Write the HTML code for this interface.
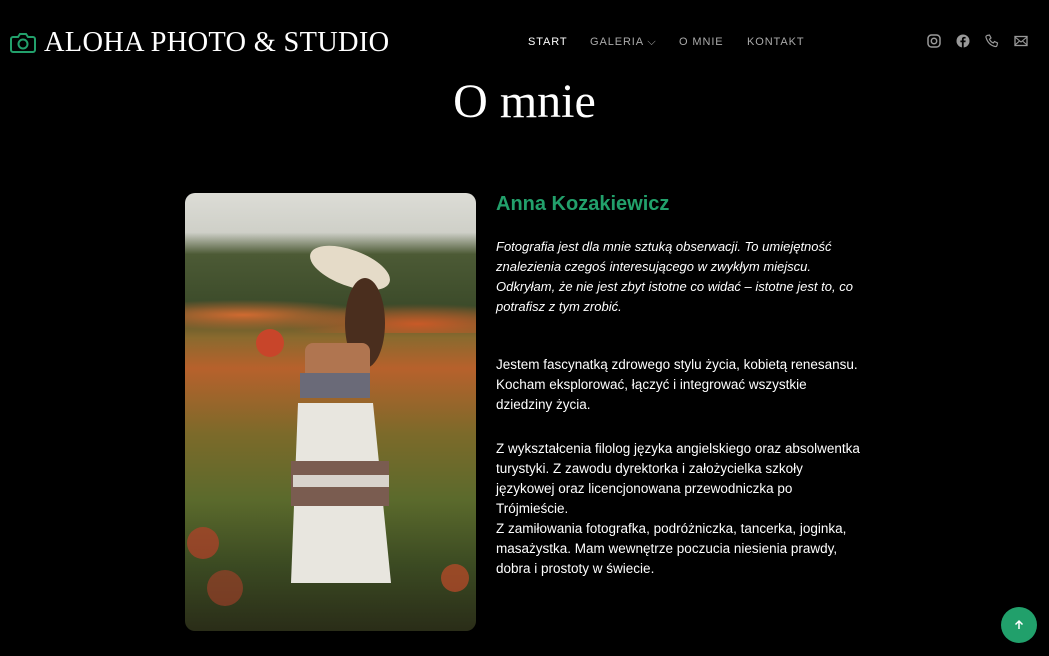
<!DOCTYPE html>
<html><head><meta charset="utf-8"><style>
*{margin:0;padding:0;box-sizing:border-box}
body{width:1049px;height:656px;background:#000;color:#fff;font-family:"Liberation Sans",sans-serif;position:relative;overflow:hidden}
.logo{position:absolute;left:10px;top:27px;display:flex;align-items:center}
.logo span{font-family:"Liberation Serif",serif;font-size:28.4px;color:#fff;margin-left:8px;letter-spacing:.3px}
nav{position:absolute;top:36px;left:528px;font-size:11px;letter-spacing:.9px}
nav a{color:#aaa;text-decoration:none;position:absolute;white-space:nowrap}
.ic{position:absolute;top:34px}
h1{position:absolute;top:74px;left:0;width:1049px;text-align:center;font-family:"Liberation Serif",serif;font-weight:normal;font-size:48px}
.photo{position:absolute;left:185px;top:193px;width:291px;height:438px;border-radius:10px;overflow:hidden;
background:linear-gradient(180deg,#dcdcd6 0%,#cfd0c8 9%,#4c5a35 14%,#3c4b2a 26%,#8a6a2e 33%,#b7612c 40%,#7c6a2a 55%,#5b6a2c 70%,#3b4a22 85%,#2a2d18 100%)}
.name{position:absolute;left:496px;top:193px;color:#22a06b;font-size:20px;font-weight:bold}
.q{position:absolute;left:496px;top:237px;font-size:13px;font-style:italic;line-height:20px;width:360px}
.p{position:absolute;left:496px;font-size:13.5px;line-height:20px;width:368px}
.up{position:absolute;left:1001px;top:607px;width:36px;height:36px;border-radius:50%;background:#21a06b;display:flex;align-items:center;justify-content:center}
</style></head><body>
<div class="logo"><svg width="26" height="22" viewBox="0 0 26 22"><path d="M3 5h5l2-3h6l2 3h5a2 2 0 0 1 2 2v11a2 2 0 0 1-2 2H3a2 2 0 0 1-2-2V7a2 2 0 0 1 2-2z" fill="none" stroke="#22a06b" stroke-width="2"/><circle cx="13" cy="12" r="4.5" fill="none" stroke="#22a06b" stroke-width="2"/></svg><span>ALOHA PHOTO &amp; STUDIO</span></div>
<nav><a style="left:0;color:#fff">START</a><a style="left:62px">GALERIA ⌵</a><a style="left:151px">O MNIE</a><a style="left:219px">KONTAKT</a></nav>
<svg class="ic" style="left:927px" width="14" height="14" viewBox="0 0 14 14"><rect x="1" y="1" width="12" height="12" rx="3.5" fill="none" stroke="#999" stroke-width="1.5"/><circle cx="7" cy="7" r="2.7" fill="none" stroke="#999" stroke-width="1.5"/></svg>
<svg class="ic" style="left:956px" width="14" height="14" viewBox="0 0 14 14"><circle cx="7" cy="7" r="6.5" fill="#999"/><path d="M7.7 14V8.3h1.7l.3-1.8H7.7V5.4c0-.5.2-.9.9-.9h1V3a8 8 0 0 0-1.4-.1c-1.4 0-2.3.8-2.3 2.3v1.3H4.4v1.8h1.5V14z" fill="#000"/></svg>
<svg class="ic" style="left:985px" width="14" height="14" viewBox="0 0 14 14"><path d="M2 1.5l2.5-.5 1.5 3-1.5 1.2c.8 1.8 2 3 3.8 3.8L9.5 7.5l3 1.5-.5 2.5c-.3.8-1 1.2-1.8 1C5.5 11.5 2.5 8.5 1 3.3c-.2-.8.2-1.5 1-1.8z" fill="none" stroke="#999" stroke-width="1.2"/></svg>
<svg class="ic" style="left:1014px" width="14" height="14" viewBox="0 0 14 14"><rect x="1" y="2.5" width="12" height="9" fill="none" stroke="#999" stroke-width="1.3"/><path d="M1 3l6 5 6-5M1 11l4.5-4M13 11L8.5 7" fill="none" stroke="#999" stroke-width="1.1"/></svg>
<h1>O mnie</h1>
<div class="photo">
<div style="position:absolute;left:0;top:95px;width:291px;height:45px;background:radial-gradient(ellipse at 20% 60%,#d06a30 0,transparent 40%),radial-gradient(ellipse at 80% 80%,#c85a28 0,transparent 40%)"></div>
<svg width="291" height="438" style="position:absolute;left:0;top:0"><ellipse cx="165" cy="75" rx="42" ry="18" fill="#e5dbc8" transform="rotate(20 165 75)"/><ellipse cx="180" cy="130" rx="20" ry="45" fill="#4a2e1e"/><rect x="120" y="150" width="65" height="50" rx="8" fill="#b07550"/><path d="M113 210h75l18 180h-100z" fill="#e8e6df"/><rect x="106" y="268" width="98" height="45" fill="#7a5c50"/><rect x="108" y="282" width="96" height="12" fill="#d8d3cc"/><rect x="115" y="180" width="70" height="25" fill="#6a6a78"/><circle cx="85" cy="150" r="14" fill="#c8452a"/><circle cx="18" cy="350" r="16" fill="#b5402a" opacity=".7"/><circle cx="270" cy="385" r="14" fill="#c04a2a" opacity=".7"/><circle cx="40" cy="395" r="18" fill="#a8402a" opacity=".6"/></svg>
</div>
<div class="name">Anna Kozakiewicz</div>
<div class="q">Fotografia jest dla mnie sztuką obserwacji. To umiejętność znalezienia czegoś interesującego w zwykłym miejscu. Odkryłam, że nie jest zbyt istotne co widać – istotne jest to, co potrafisz z tym zrobić.</div>
<div class="p" style="top:355px">Jestem fascynatką zdrowego stylu życia, kobietą renesansu.<br>Kocham eksplorować, łączyć i integrować wszystkie<br>dziedziny życia.</div>
<div class="p" style="top:439px">Z wykształcenia filolog języka angielskiego oraz absolwentka<br>turystyki. Z zawodu dyrektorka i założycielka szkoły<br>językowej oraz licencjonowana przewodniczka po<br>Trójmieście.<br>Z zamiłowania fotografka, podróżniczka, tancerka, joginka,<br>masażystka. Mam wewnętrze poczucia niesienia prawdy,<br>dobra i prostoty w świecie.</div>
<div class="up"><svg width="12" height="12" viewBox="0 0 12 12"><path d="M6 10V2M2.5 5.5L6 2l3.5 3.5" fill="none" stroke="#fff" stroke-width="1.5"/></svg></div>
</body></html>
